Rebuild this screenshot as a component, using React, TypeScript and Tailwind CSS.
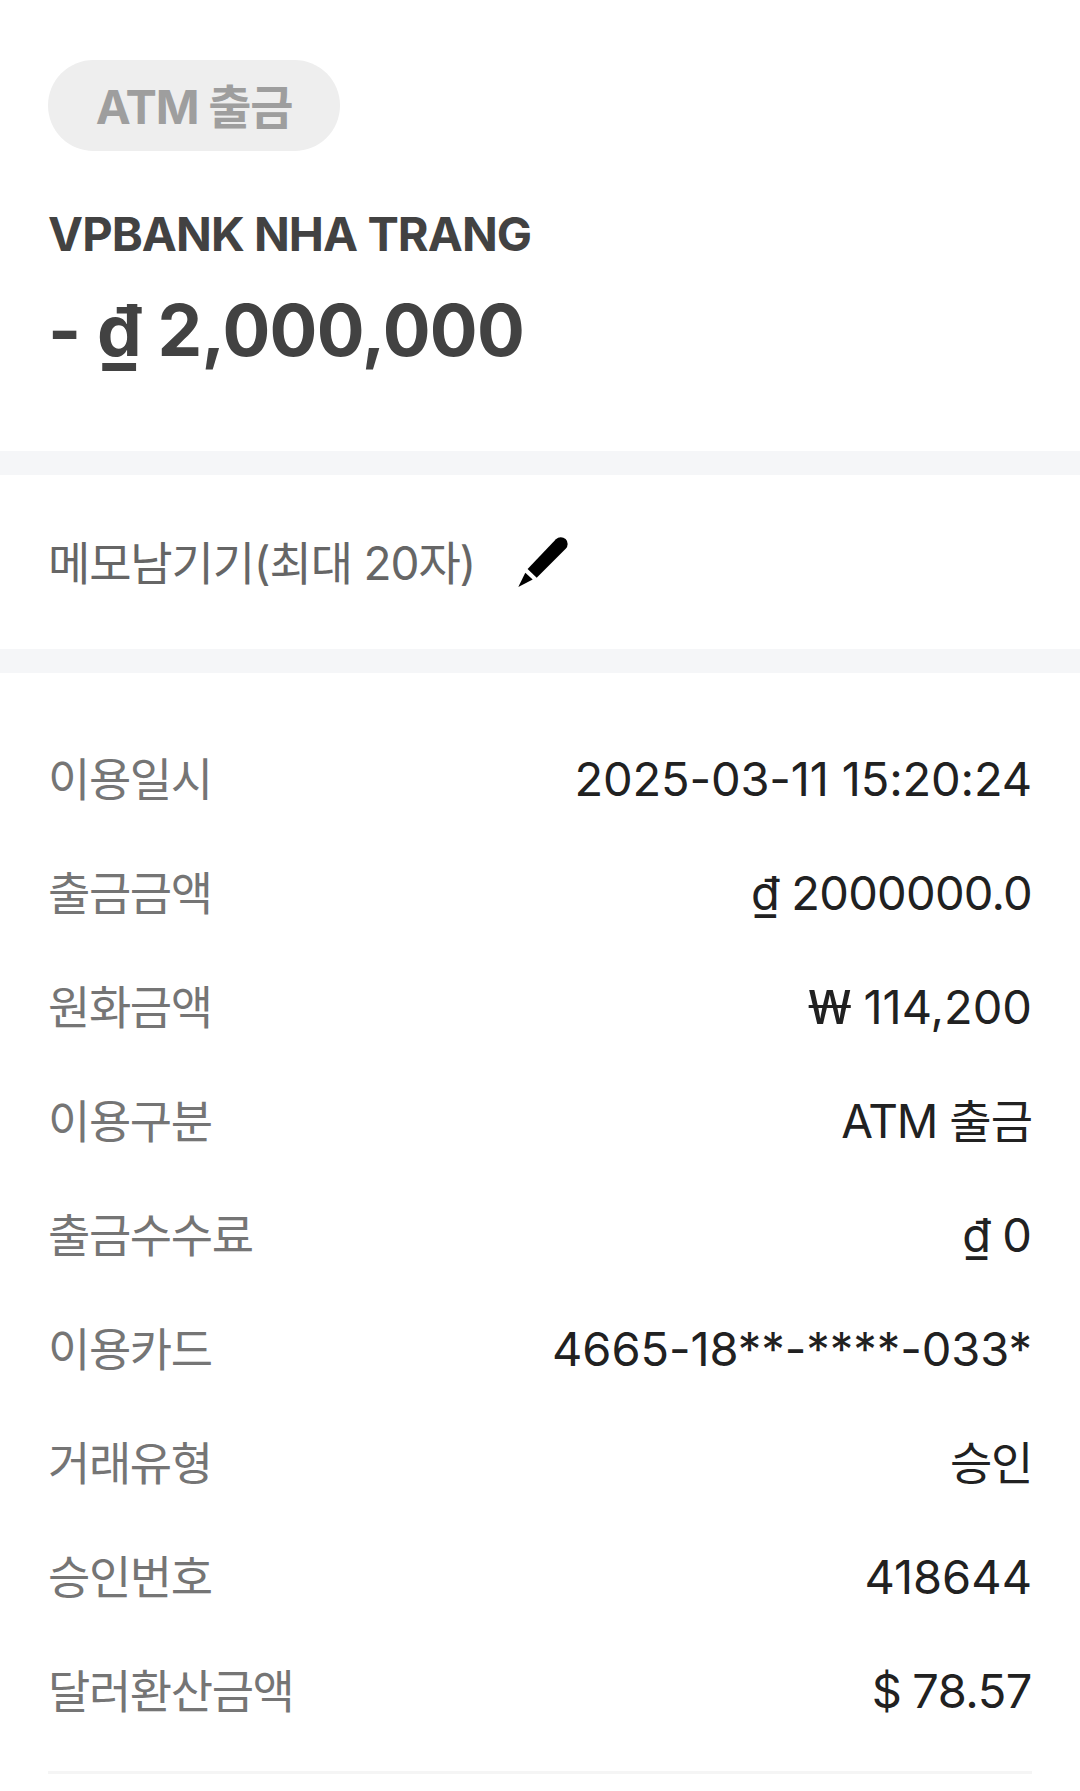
import type { ReactNode } from 'react';

interface Detail {
  label: string;
  value: ReactNode;
  valueClass: string;
}

function WonSign() {
  return (
    <span className="mr-[10px] inline-block origin-left scale-x-[1.35] font-['Noto_Sans',sans-serif] text-[48px] leading-none font-normal">
      ₩
    </span>
  );
}

const details: Detail[] = [
  { label: '이용일시', value: '2025-03-11 15:20:24', valueClass: 'text-[47px] tracking-[-0.15px]' },
  { label: '출금금액', value: '₫ 2000000.0', valueClass: 'text-[47px] tracking-[-0.75px]' },
  { label: '원화금액', value: <><WonSign /> 114,200</>, valueClass: 'text-[47px]' },
  { label: '이용구분', value: 'ATM 출금', valueClass: 'text-[46px] tracking-[-1px]' },
  { label: '출금수수료', value: '₫ 0', valueClass: 'text-[47px] [word-spacing:-2px]' },
  { label: '이용카드', value: '4665-18**-****-033*', valueClass: 'text-[47px] tracking-[-0.08px]' },
  { label: '거래유형', value: '승인', valueClass: 'text-[46px] tracking-[-1.3px]' },
  { label: '승인번호', value: '418644', valueClass: 'text-[47px]' },
  { label: '달러환산금액', value: '$ 78.57', valueClass: 'text-[47px] tracking-[-0.45px] [word-spacing:-2px]' },
];

function PencilIcon() {
  return (
    <svg viewBox="0 0 50 50" className="h-[50px] w-[50px]" fill="#000" aria-hidden="true">
      <path d="M9.6 32 L37.9 2.2 A6.8 6.8 0 0 1 47.7 11.8 L18.7 40.8 Z" />
      <path d="M7.3 35.7 L14.7 42.5 L0.3 50 Z" />
    </svg>
  );
}

export default function App() {
  return (
    <main className="h-[1791px] w-[1080px] overflow-hidden bg-white font-['Inter','Noto_Sans_CJK_KR',sans-serif]">
      <header className="flex h-[451px] flex-col items-start px-12 pt-[60px]">
        <span className="flex h-[91px] w-[292px] items-center justify-center rounded-full bg-[#eeeeee] pt-1 text-[47px] font-bold tracking-[-1.2px] whitespace-nowrap text-[#9e9e9e]">
          ATM 출금
        </span>
        <h1 className="mt-[52px] text-[47px] leading-[62px] font-bold tracking-[-0.93px] whitespace-nowrap text-[#424242]">
          VPBANK NHA TRANG
        </h1>
        <p className="mt-[20px] text-[71px] leading-[90px] font-bold tracking-[-0.75px] [word-spacing:0.5px] whitespace-nowrap text-[#424242]">
          - ₫ 2,000,000
        </p>
      </header>

      <div className="h-6 bg-[#f5f6f8]" />

      <section className="flex h-[174px] items-center px-12">
        <span className="w-[427px] pt-[3px] text-[46px] tracking-[-1.15px] whitespace-nowrap text-[#666666]">
          메모남기기(최대 20자)
        </span>
        <button type="button" className="ml-[43px]">
          <PencilIcon />
        </button>
      </section>

      <div className="h-6 bg-[#f5f6f8]" />

      <section className="px-12 pt-[49px]">
        <dl>
          {details.map(({ label, value, valueClass }) => (
            <div key={label} className="flex h-[114px] items-center justify-between whitespace-nowrap">
              <dt className="pt-px text-[46px] tracking-[-1.4px] text-[#757575]">{label}</dt>
              <dd className={`text-[#212121] ${valueClass}`}>{value}</dd>
            </div>
          ))}
        </dl>
        <div className="mt-[23px] h-[3px] bg-[#f5f5f5]" />
      </section>
    </main>
  );
}
